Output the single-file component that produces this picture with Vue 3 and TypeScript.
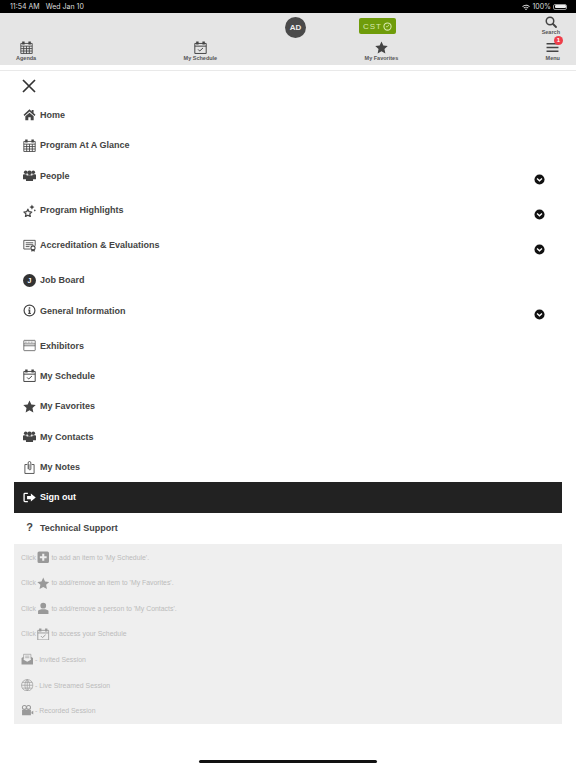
<template>
  <div class="page">
    <!-- icon sprite, everything below just <use>s it -->
    <svg class="sprite" width="0" height="0">
      <symbol id="i-home" viewBox="0 0 24 24">
        <path fill="currentColor" d="M12 2.500 1 12.600l1.800 2.200L12 6.400l9.200 8.400 1.800-2.200-3.500-3.400V3.500h-3.500v3zM12 8.600 4.300 15.400V22.500h5.500v-5.500h4.400v5.500h5.500v-7.100z" />
      </symbol>
      <symbol id="i-cal" viewBox="0 0 24 24">
        <path fill="none" stroke="currentColor" stroke-width="1.600" d="M1.500 4.500h21v18.500h-21zM1.500 9.500h21M1.500 14h21M1.500 18.500h21M6.800 9.500V23M12 9.500V23M17.200 9.500V23" />
        <path fill="currentColor" d="M4 1h4.500v5.500H4zM15.500 1H20v5.500h-4.500z" />
      </symbol>
      <symbol id="i-check" viewBox="0 0 24 24">
        <path fill="none" stroke="currentColor" stroke-width="1.800" d="M1.500 4.500h21V23h-21zM1.500 9.500h21" />
        <path fill="currentColor" d="M4 1h4.500v5.500H4zM15.500 1H20v5.500h-4.500z" />
        <path fill="none" stroke="currentColor" stroke-width="1.800" d="m7.500 15.500 3 3 6-5.500" />
      </symbol>
      <symbol id="i-users" viewBox="0 0 24 24">
        <circle cx="5" cy="6" r="3.300" fill="currentColor" />
        <circle cx="19" cy="6" r="3.300" fill="currentColor" />
        <circle cx="12" cy="7" r="4.200" fill="currentColor" />
        <path fill="currentColor" d="M0 11c1-1.500 7-1.500 7 0v8H0zM17 11c1-1.500 7-1.500 7 0v8h-7z" />
        <path fill="currentColor" d="M5.500 13.500c1-2.500 12-2.500 13 0V22h-13z" />
      </symbol>
      <symbol id="i-spark" viewBox="0 0 24 24">
        <path fill="none" stroke="currentColor" stroke-width="2.300" stroke-linejoin="round" d="m9 9.500 2.200 4.700 5 .6-3.700 3.400 1 5L9 20.700l-4.500 2.500 1-5-3.700-3.400 5-.6z" />
        <path fill="currentColor" d="m16.500 1 1.500 3.200 3.200 1.500-3.200 1.500-1.500 3.200-1.500-3.200-3.200-1.500 3.200-1.500zM21.800 9.800l1.700 2-1.700 2-1.700-2z" />
      </symbol>
      <symbol id="i-cert" viewBox="0 0 24 24">
        <path fill="none" stroke="currentColor" stroke-width="1.600" d="M14 18.500H1.500V2.500h21v10" />
        <path fill="none" stroke="currentColor" stroke-width="1.600" d="M5 7h14M5 10.500h14M5 14h7" />
        <circle cx="18.500" cy="16.500" r="3.800" fill="none" stroke="currentColor" stroke-width="1.900" />
        <path fill="currentColor" d="M15.500 19h6v4.500l-3-1.500-3 1.500z" />
      </symbol>
      <symbol id="i-info" viewBox="0 0 24 24">
        <circle cx="12" cy="12" r="10" fill="none" stroke="currentColor" stroke-width="2.200" />
        <path fill="currentColor" d="M10.600 5.800h2.800v2.800h-2.800zM9.600 10.300h3.800v6.200h1.200v1.900H9.600v-1.900h1v-4.300h-1z" />
      </symbol>
      <symbol id="i-booth" viewBox="0 0 24 24">
        <path fill="none" stroke="currentColor" stroke-width="1.300" d="M2.500 2.500h19a1 1 0 0 1 1 1v17a1 1 0 0 1-1 1h-19a1 1 0 0 1-1-1v-17a1 1 0 0 1 1-1zM1.500 9h21M1.500 12.500h21" />
        <path fill="none" stroke="currentColor" stroke-width="1.300" stroke-dasharray="1.500 1.300" d="M3.500 5.800h17" />
      </symbol>
      <symbol id="i-star" viewBox="0 0 24 24">
        <path fill="currentColor" d="m12 1 3.400 7.400 8.100 1-6 5.500 1.600 8L12 19l-7.100 3.900 1.600-8-6-5.500 8.100-1z" />
      </symbol>
      <symbol id="i-note" viewBox="0 0 24 24">
        <path fill="none" stroke="currentColor" stroke-width="1.600" d="M8 6.500H3.500V23h17V6.500H16" />
        <path fill="none" stroke="currentColor" stroke-width="1.600" d="M9.500 15V3.500a2.500 2.500 0 0 1 5 0V15a1.800 1.800 0 0 1-3.500 0V6" />
      </symbol>
      <symbol id="i-out" viewBox="0 0 24 24">
        <path fill="none" stroke="currentColor" stroke-width="2.400" d="M9 4.500H3.500A1.500 1.500 0 0 0 2 6v12a1.500 1.500 0 0 0 1.500 1.500H9" />
        <path fill="currentColor" d="M7.500 9h7V4.500l9 7.500-9 7.500V15h-7z" />
      </symbol>
      <symbol id="i-plus" viewBox="0 0 24 24">
        <path fill="currentColor" fill-rule="evenodd" d="M4 1h16a3 3 0 0 1 3 3v16a3 3 0 0 1-3 3H4a3 3 0 0 1-3-3V4a3 3 0 0 1 3-3zm6 4.500V10H5.500v4H10v4.500h4V14h4.500v-4H14V5.500z" />
      </symbol>
      <symbol id="i-person" viewBox="0 0 24 24">
        <circle cx="12" cy="7" r="5.500" fill="currentColor" />
        <path fill="currentColor" d="M2 17c1-4 19-4 20 0v6H2z" />
      </symbol>
      <symbol id="i-mail" viewBox="0 0 24 24">
        <path fill="none" stroke="currentColor" stroke-width="1.300" d="M5 11V2.500h14V11" />
        <path fill="currentColor" d="M1 9.500 5 7v6l7 4 7-4V7l4 2.500V22H1z" />
        <path fill="none" stroke="currentColor" stroke-width="1.200" d="M8 6h8M8 9h8" />
      </symbol>
      <symbol id="i-globe" viewBox="0 0 24 24">
        <path fill="none" stroke="currentColor" stroke-width="1.300" d="M12 1a11 11 0 1 0 0 22 11 11 0 0 0 0-22zM12 1c-6 6-6 16 0 22M12 1c6 6 6 16 0 22M12 1v22M1 12h22M2.500 6.500h19M2.500 17.500h19" />
      </symbol>
      <symbol id="i-video" viewBox="0 0 24 24">
        <circle cx="6.500" cy="6.500" r="3.800" fill="none" stroke="currentColor" stroke-width="2" />
        <circle cx="14.500" cy="6.500" r="3.800" fill="none" stroke="currentColor" stroke-width="2" />
        <path fill="currentColor" d="M2 11.500h17v10H2zM20 15l4-2v7l-4-2z" />
      </symbol>
      <symbol id="i-search" viewBox="0 0 24 24">
        <circle cx="10" cy="10" r="7.500" fill="none" stroke="currentColor" stroke-width="3" />
        <path stroke="currentColor" stroke-width="3.600" stroke-linecap="round" d="m16 16 6 6" />
      </symbol>
      <symbol id="i-menu" viewBox="0 0 24 24">
        <path fill="currentColor" d="M1 3.500h22v3H1zM1 10.500h22v3H1zM1 17.500h22v3H1z" />
      </symbol>
      <symbol id="i-wifi" viewBox="0 0 24 18">
        <path fill="currentColor" d="M12 2.500c4.500 0 8.500 1.700 11.500 4.600l-2 2.200A13.500 13.500 0 0 0 12 5.500a13.500 13.500 0 0 0-9.500 3.800l-2-2.200A16.500 16.500 0 0 1 12 2.500zM12 8.200c3 0 5.600 1.100 7.600 3l-2 2.200a8 8 0 0 0-11.200 0l-2-2.200c2-1.900 4.600-3 7.600-3zM12 14c1.300 0 2.500.5 3.400 1.300L12 18.500l-3.400-3.200c.9-.8 2.100-1.300 3.400-1.300z" />
      </symbol>
    </svg>

    <div class="status">
      <span>11:54 AM</span>
      <span class="date">Wed Jan 10</span>
      <span class="status-right">
        <svg class="wifi"><use href="#i-wifi" /></svg>
        <span>100%</span>
        <span class="battery"><i></i></span>
      </span>
    </div>

    <header class="header">
      <div class="top-row">
        <div class="avatar">AD</div>
        <div class="tz">
          <span>CST</span>
          <svg class="tz-clock" viewBox="0 0 12 12">
            <circle cx="6" cy="6" r="4.800" fill="none" stroke="currentColor" stroke-width="1.400" />
            <path fill="none" stroke="currentColor" stroke-width="1.100" d="M8 3.500 6 6.300H4" />
          </svg>
        </div>
        <div class="search">
          <svg class="search-icon"><use href="#i-search" /></svg>
          <span>Search</span>
        </div>
      </div>
      <nav class="tabs">
        <div v-for="t in tabs" :key="t.label" class="tab">
          <svg class="tab-icon"><use :href="'#i-' + t.icon" /></svg>
          <span v-if="t.badge" class="badge">{{ t.badge }}</span>
          <span>{{ t.label }}</span>
        </div>
      </nav>
    </header>

    <div class="header-gap"></div>

    <main class="drawer">
      <svg class="close" viewBox="0 0 14 14">
        <path stroke="#333" stroke-width="1.700" d="m1 1 12 12M13 1 1 13" />
      </svg>

      <ul class="menu">
        <li
          v-for="m in menu"
          :key="m.label"
          class="item"
          :class="{ tall: m.more, dark: m.dark }"
        >
          <span v-if="m.glyph" class="glyph">{{ m.glyph }}</span>
          <span v-else-if="m.letter" class="letter">{{ m.letter }}</span>
          <svg v-else class="item-icon"><use :href="'#i-' + m.icon" /></svg>
          <span class="label">{{ m.label }}</span>
          <svg v-if="m.more" class="chevron" viewBox="0 0 12 12">
            <circle cx="6" cy="6" r="5.500" fill="#111" />
            <path fill="none" stroke="#fff" stroke-width="1.500" d="m3.300 4.900 2.700 2.500 2.700-2.500" />
          </svg>
        </li>
      </ul>

      <section class="legend">
        <div v-for="l in legend" :key="l.text" class="legend-row">
          <span v-if="l.click">Click</span>
          <svg class="legend-icon"><use :href="'#i-' + l.icon" /></svg>
          <span>{{ l.text }}</span>
        </div>
      </section>
    </main>

    <div class="home-bar"></div>
  </div>
</template>

<script setup lang="ts">
interface MenuItem {
  label: string
  icon?: string
  glyph?: string
  letter?: string
  more?: boolean
  dark?: boolean
}

const tabs = [
  { label: 'Agenda', icon: 'cal' },
  { label: 'My Schedule', icon: 'check' },
  { label: 'My Favorites', icon: 'star' },
  { label: 'Menu', icon: 'menu', badge: '1' },
]

const menu: MenuItem[] = [
  { label: 'Home', icon: 'home' },
  { label: 'Program At A Glance', icon: 'cal' },
  { label: 'People', icon: 'users', more: true },
  { label: 'Program Highlights', icon: 'spark', more: true },
  { label: 'Accreditation & Evaluations', icon: 'cert', more: true },
  { label: 'Job Board', letter: 'J' },
  { label: 'General Information', icon: 'info', more: true },
  { label: 'Exhibitors', icon: 'booth' },
  { label: 'My Schedule', icon: 'check' },
  { label: 'My Favorites', icon: 'star' },
  { label: 'My Contacts', icon: 'users' },
  { label: 'My Notes', icon: 'note' },
  { label: 'Sign out', icon: 'out', dark: true },
  { label: 'Technical Support', glyph: '?' },
]

const legend = [
  { click: true, icon: 'plus', text: "to add an item to 'My Schedule'." },
  { click: true, icon: 'star', text: "to add/remove an item to 'My Favorites'." },
  { click: true, icon: 'person', text: "to add/remove a person to 'My Contacts'." },
  { click: true, icon: 'check', text: 'to access your Schedule' },
  { click: false, icon: 'mail', text: '- Invited Session' },
  { click: false, icon: 'globe', text: '- Live Streamed Session' },
  { click: false, icon: 'video', text: '- Recorded Session' },
]
</script>

<style>
html,
body {
  margin: 0;
  background: #fff;
}
</style>

<style scoped>
.page {
  width: 576px;
  height: 768px;
  overflow: hidden;
  position: relative;
  font-family: "Liberation Sans", Arial, sans-serif;
  color: #444;
}

.sprite {
  position: absolute;
}

.status {
  height: 13px;
  background: #000;
  color: #ddd;
  display: flex;
  align-items: center;
  padding: 0 9px 0 10px;
  font-family: Inter, sans-serif;
  font-size: 7px;
}

.date {
  margin-left: 6px;
}

.status-right {
  margin-left: auto;
  display: flex;
  align-items: center;
  gap: 2px;
}

.wifi {
  width: 8px;
  height: 6px;
  color: #ddd;
}

.battery {
  width: 14px;
  height: 6px;
  border: 0.5px solid #999;
  border-radius: 2px;
  padding: 0.5px;
  box-sizing: border-box;
  display: flex;
}

.battery i {
  flex: 1;
  background: #eee;
  border-radius: 1px;
}

.header {
  height: 52px;
  background: #e5e5e5;
  box-sizing: border-box;
  padding: 3px 16px 0 16px;
}

.top-row {
  display: flex;
  align-items: flex-start;
  height: 24px;
  padding-left: 269px;
}

.avatar {
  width: 21px;
  height: 21px;
  margin-top: 1px;
  border-radius: 50%;
  background: #4a4a4a;
  color: #eee;
  font-size: 8px;
  font-weight: 700;
  display: flex;
  align-items: center;
  justify-content: center;
}

.tz {
  width: 37px;
  height: 16px;
  margin: 2px 0 0 53px;
  border-radius: 2px;
  background: #6f9c0a;
  color: #d8eab0;
  font-size: 8px;
  letter-spacing: 1px;
  display: flex;
  align-items: center;
  justify-content: center;
  gap: 1px;
}

.tz-clock {
  width: 9px;
  height: 9px;
}

.search {
  margin-left: auto;
  display: flex;
  flex-direction: column;
  align-items: center;
  font-size: 5.5px;
  font-weight: 700;
  color: #555;
}

.search-icon {
  width: 12px;
  height: 12px;
  color: #444;
  margin-bottom: 1px;
}

.tabs {
  display: flex;
  justify-content: space-between;
  margin-top: 1px;
}

.tab {
  position: relative;
  display: flex;
  flex-direction: column;
  align-items: center;
  font-size: 5.5px;
  font-weight: 700;
  color: #555;
  gap: 1px;
}

.tab-icon {
  width: 13px;
  height: 13px;
  color: #444;
}

.badge {
  position: absolute;
  top: -5px;
  right: -3px;
  width: 9px;
  height: 9px;
  border-radius: 50%;
  background: #ee3e4a;
  color: #fff;
  font-size: 6px;
  line-height: 9px;
  text-align: center;
}

.header-gap {
  height: 5px;
  border-bottom: 1px solid #e9e9e9;
}

.drawer {
  padding: 0 14px;
}

.close {
  display: block;
  width: 14px;
  height: 14px;
  margin: 8px 0 0 8px;
}

.menu {
  list-style: none;
  margin: 6.6px 0 0;
  padding: 0;
}

.item {
  height: 30.4px;
  box-sizing: border-box;
  padding-left: 9px;
  display: flex;
  align-items: center;
  font-size: 9px;
  font-weight: 700;
  color: #444;
  position: relative;
}

.item.tall {
  height: 34.9px;
  padding-bottom: 4.5px;
}

.item.dark {
  background: #222;
  color: #fff;
}

.label {
  margin-left: 4px;
}

.item-icon,
.glyph,
.letter {
  width: 13px;
  height: 13px;
  flex: none;
}

.glyph {
  text-align: center;
  font-size: 11px;
  line-height: 13px;
}

.letter {
  border-radius: 50%;
  background: #333;
  color: #fff;
  font-size: 7px;
  line-height: 13px;
  text-align: center;
}

.chevron {
  position: absolute;
  right: 17.5px;
  top: 13.5px;
  width: 11px;
  height: 11px;
}

.legend {
  margin-top: 1.4px;
  height: 180px;
  background: #efefef;
  box-sizing: border-box;
  padding: 0 6px 1px 7px;
  display: flex;
  flex-direction: column;
  justify-content: space-around;
  font-size: 6.9px;
  color: #bbb;
}

.legend-row {
  display: flex;
  align-items: center;
  gap: 1.5px;
}

.legend-icon {
  width: 12.5px;
  height: 12.5px;
  color: #999;
}

.home-bar {
  position: absolute;
  left: 199px;
  bottom: 5px;
  width: 178px;
  height: 3px;
  border-radius: 2px;
  background: #111;
}
</style>
